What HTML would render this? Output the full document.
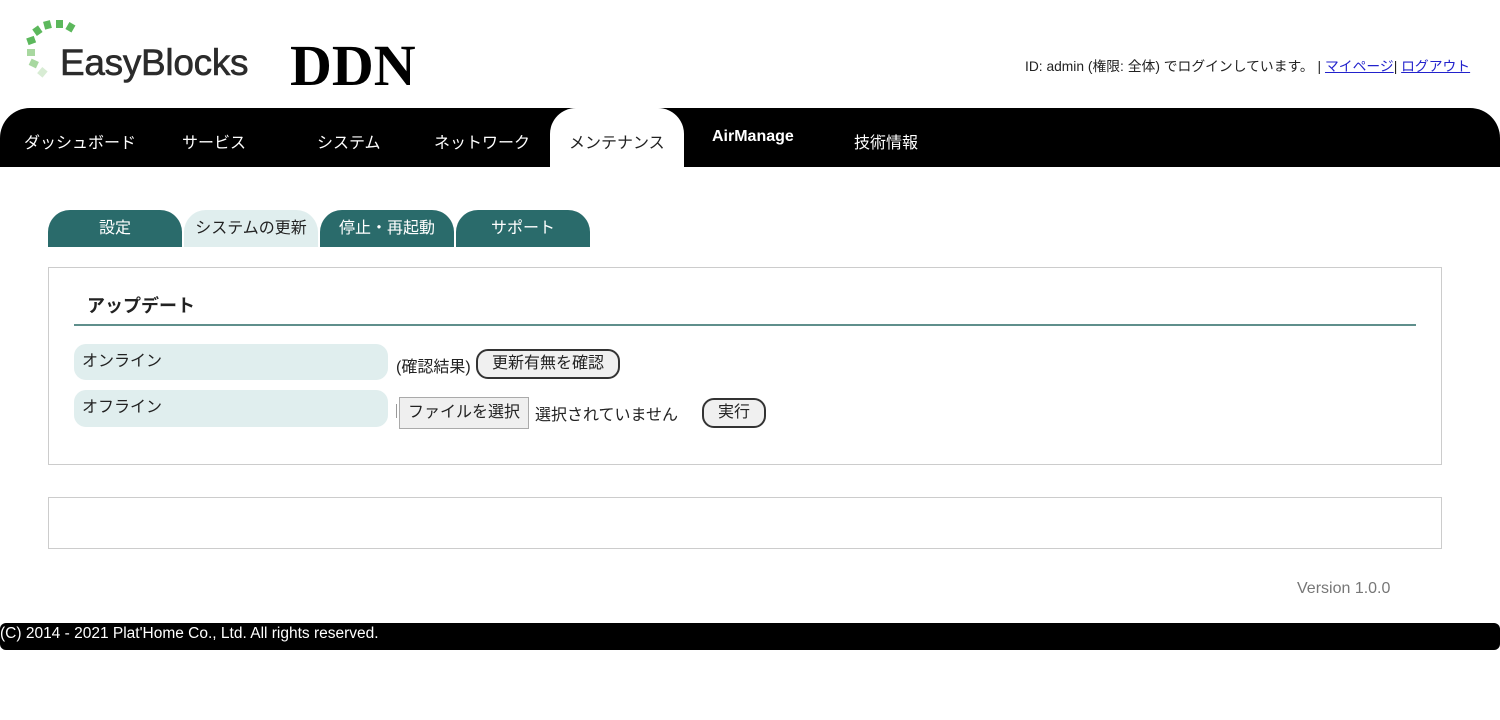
<!DOCTYPE html>
<html><head><meta charset="utf-8"><style>
body{margin:0;width:1500px;height:720px;background:#fff;position:relative;overflow:hidden;font-family:"Liberation Sans","Noto Sans CJK JP",sans-serif;color:#222}
.a{position:absolute;white-space:nowrap}
.nav{left:0;top:108px;width:1500px;height:59px;background:#000;border-radius:30px 30px 0 0}
.ni{top:129px;color:#fff;font-size:16px}
.st{top:210px;height:37px;width:134px;background:#2a6b6b;color:#fff;border-radius:22px 22px 0 0;text-align:center;line-height:34px;font-size:16px;padding-top:2px;box-sizing:border-box}
.lab{left:74px;width:314px;height:36px;background:#e0eeee;border-radius:12px;font-size:16px;line-height:34px;box-sizing:border-box;padding-left:8px;padding-top:1px}
.btn{border:2px solid #333;border-radius:12px;background:#f0f0f0;font-size:16px;box-sizing:border-box;text-align:center}
</style></head><body>
<svg class="a" style="left:24px;top:18px" width="62" height="62" viewBox="0 0 62 62">
<g fill="#5cb85c"><rect x="20" y="3" width="7" height="8" transform="rotate(-15 23 7)"/><rect x="32" y="2" width="7" height="8"/><rect x="43" y="5" width="7" height="8" transform="rotate(30 46 9)"/><rect x="10" y="9" width="7" height="8" transform="rotate(-35 13 13)"/><rect x="3" y="19" width="8" height="7" transform="rotate(-20 7 22)"/></g>
<g fill="#a8d8a0"><rect x="3" y="31" width="8" height="7"/><rect x="6" y="42" width="8" height="7" transform="rotate(25 10 45)"/></g>
<rect x="15" y="50" width="7" height="8" fill="#d8ecd4" transform="rotate(40 18 54)"/>
</svg>
<div class="a" style="left:60px;top:42px;font-size:37px;color:#2b2b2b;letter-spacing:-0.3px;-webkit-text-stroke:0.6px #2b2b2b">EasyBlocks</div>
<div class="a" style="left:290px;top:32px;font-size:58px;font-weight:bold;font-family:'Liberation Serif',serif;color:#000">DDN</div>
<div class="a" style="left:1025px;top:55px;font-size:13.8px;color:#222">ID: admin (権限: 全体) でログインしています。 | <span style="color:#22c;text-decoration:underline">マイページ</span>| <span style="color:#22c;text-decoration:underline">ログアウト</span></div>
<div class="a nav"></div>
<div class="a" style="left:550px;top:108px;width:134px;height:59px;background:#fff;border-radius:26px 26px 0 0"></div>
<div class="a ni" style="left:24px">ダッシュボード</div>
<div class="a ni" style="left:182px">サービス</div>
<div class="a ni" style="left:317px">システム</div>
<div class="a ni" style="left:434px">ネットワーク</div>
<div class="a ni" style="left:569px;color:#222">メンテナンス</div>
<div class="a ni" style="left:712px;top:128px;font-weight:bold;font-size:16px">AirManage</div>
<div class="a ni" style="left:854px">技術情報</div>
<div class="a st" style="left:48px">設定</div>
<div class="a st" style="left:184px;background:#e0eeee;color:#222">システムの更新</div>
<div class="a st" style="left:320px">停止・再起動</div>
<div class="a st" style="left:456px">サポート</div>
<div class="a" style="left:48px;top:267px;width:1392px;height:196px;border:1px solid #ccc"></div>
<div class="a" style="left:87px;top:292px;font-size:18px;font-weight:bold">アップデート</div>
<div class="a" style="left:74px;top:324px;width:1342px;height:2px;background:#5f8f8c"></div>
<div class="a lab" style="top:344px">オンライン</div>
<div class="a lab" style="top:390px;height:37px">オフライン</div>
<div class="a" style="left:396px;top:353px;font-size:16px">(確認結果)</div>
<div class="a btn" style="left:476px;top:349px;width:144px;height:30px;line-height:26px">更新有無を確認</div>
<div class="a" style="left:396px;top:404px;width:1px;height:14px;background:#999"></div>
<div class="a" style="left:399px;top:397px;width:130px;height:32px;border:1px solid #aaa;background:#efefef;box-sizing:border-box;text-align:center;line-height:29px;font-size:16px">ファイルを選択</div>
<div class="a" style="left:535px;top:401px;font-size:16px">選択されていません</div>
<div class="a btn" style="left:702px;top:398px;width:64px;height:30px;line-height:26px">実行</div>
<div class="a" style="left:48px;top:497px;width:1392px;height:50px;border:1px solid #ccc"></div>
<div class="a" style="left:1297px;top:580px;font-size:16px;color:#777">Version 1.0.0</div>
<div class="a" style="left:0;top:623px;width:1500px;height:27px;background:#000;border-radius:6px;color:#fff;font-size:15.5px;line-height:20px;padding-top:1px;box-sizing:border-box">(C) 2014 - 2021 Plat'Home Co., Ltd. All rights reserved.</div>
</body></html>
